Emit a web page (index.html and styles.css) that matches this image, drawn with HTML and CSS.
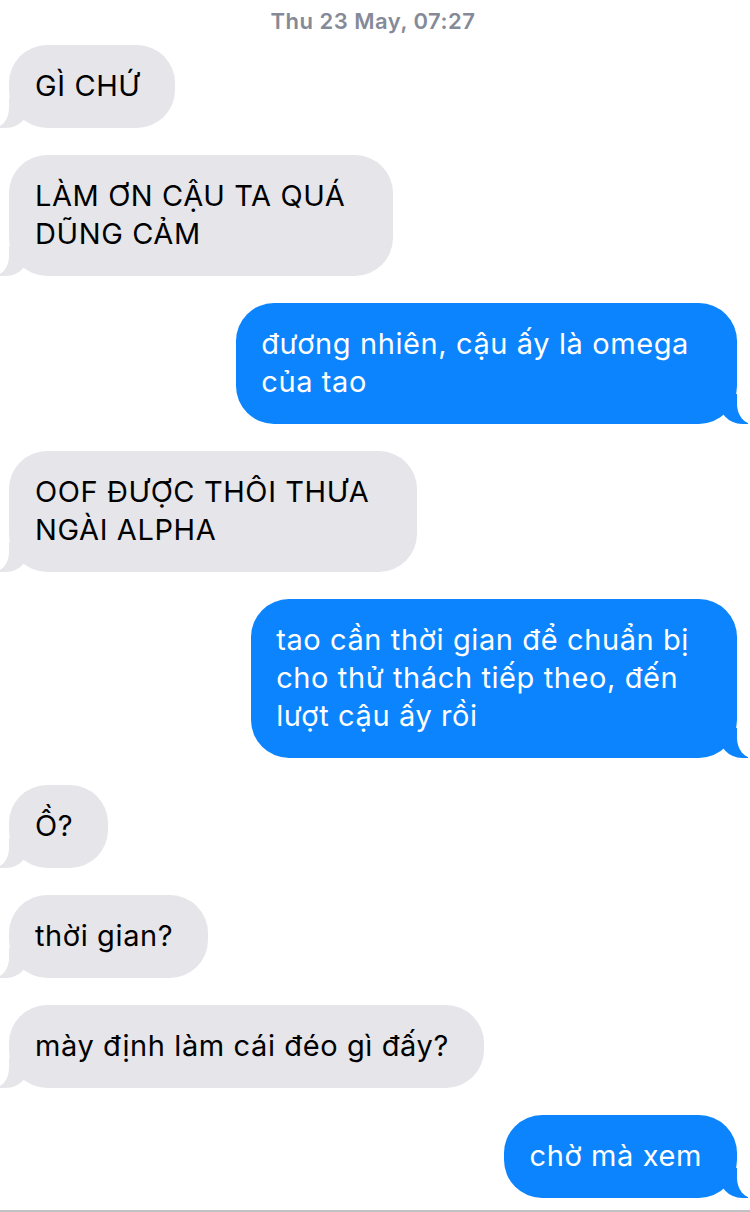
FILE: index.html
```html
<!DOCTYPE html>
<html>
<head>
<meta charset="utf-8">
<title>Tin nhắn</title>
<link rel="stylesheet" href="styles.css">
</head>
<body>

<div id="thread">
	<div class="stamp">Thu 23 May, 07:27</div>

	<div class="msg them">GÌ CHỨ</div>
	<div class="msg them wrap">LÀM ƠN CẬU TA QUÁ<br>DŨNG CẢM</div>
	<div class="msg me wrap">đương nhiên, cậu ấy là omega<br>của tao</div>
	<div class="msg them wrap">OOF ĐƯỢC THÔI THƯA<br>NGÀI ALPHA</div>
	<div class="msg me wrap">tao cần thời gian để chuẩn bị<br>cho thử thách tiếp theo, đến<br>lượt cậu ấy rồi</div>
	<div class="msg them">Ồ?</div>
	<div class="msg them">thời gian?</div>
	<div class="msg them">mày định làm cái đéo gì đấy?</div>
	<div class="msg me">chờ mà xem</div>
</div>

</body>
</html>
```

FILE: styles.css
```css
html, body {
	margin: 0;
	padding: 0;
	background: #fff;
}
#thread {
	display: flex;
	flex-direction: column;
	height: 1210px;
	padding: 0 13px 0 9px;
	border-bottom: 2px solid #c2c2c4;
	overflow: hidden;
	font-family: Inter, "Liberation Sans", Arial, sans-serif;
}
.stamp {
	padding: 9px 0 12px;
	font-size: 22px;
	line-height: 24px;
	font-weight: 600;
	color: #858a98;
	text-align: center;
	letter-spacing: 0.5px;
}
.msg {
	position: relative;
	padding: 22px 35px 23px 26px;
	font-size: 29px;
	line-height: 38px;
	letter-spacing: 0.6px;
	border-radius: 38px;
	white-space: nowrap;
}
.msg + .msg {
	margin-top: 27px;
}
/* wrapped bubbles keep some slack on the right */
.msg.wrap {
	padding-right: 48px;
}
/* incoming, tail on the left */
.them {
	align-self: flex-start;
	background: #e5e5ea;
	color: #000;
}
.them::before {
	content: "";
	position: absolute;
	bottom: 0;
	left: -9px;
	width: 30px;
	height: 30px;
	background: #e5e5ea;
	border-bottom-right-radius: 24px 26px;
}
.them::after {
	content: "";
	position: absolute;
	bottom: 0;
	left: -30px;
	width: 30px;
	height: 30px;
	background: #fff;
	border-bottom-right-radius: 16px 20px;
}
/* outgoing, tail on the right */
.me {
	align-self: flex-end;
	background: #0b84fe;
	color: #fff;
	padding-left: 25px;
}
.me::before {
	content: "";
	position: absolute;
	bottom: 0;
	right: -11px;
	width: 30px;
	height: 30px;
	background: #0b84fe;
	border-bottom-left-radius: 24px 26px;
}
.me::after {
	content: "";
	position: absolute;
	bottom: 0;
	right: -30px;
	width: 30px;
	height: 30px;
	background: #fff;
	border-bottom-left-radius: 16px 20px;
}
```
